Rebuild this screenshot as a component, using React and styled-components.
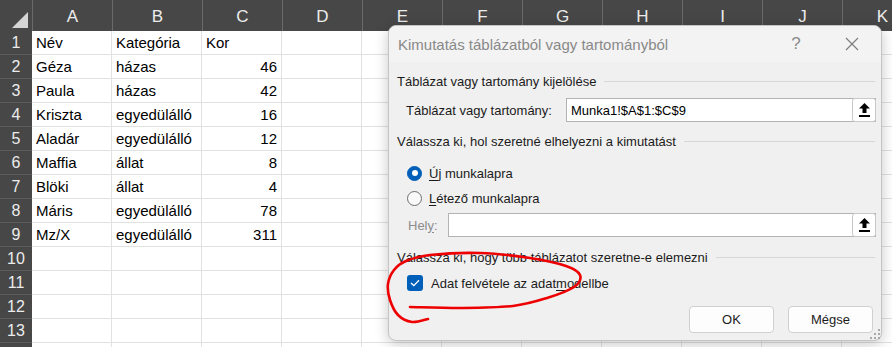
import React from 'react';
import styled, { createGlobalStyle } from 'styled-components';

const GlobalStyle = createGlobalStyle`
  html, body { margin: 0; padding: 0; background: #fff; overflow: hidden; }
  #root { position: relative; width: 892px; height: 347px; overflow: hidden; }
`;

const COLS = ['A', 'B', 'C', 'D', 'E', 'F', 'G', 'H', 'I', 'J', 'K'];
const WIDTHS = [80, 90, 80, 80, 80, 80, 80, 80, 80, 80, 80];

const DATA = [
  ['Név', 'Kategória', 'Kor'],
  ['Géza', 'házas', 46],
  ['Paula', 'házas', 42],
  ['Kriszta', 'egyedülálló', 16],
  ['Aladár', 'egyedülálló', 12],
  ['Maffia', 'állat', 8],
  ['Blöki', 'állat', 4],
  ['Máris', 'egyedülálló', 78],
  ['Mz/X', 'egyedülálló', 311],
];

const Sheet = styled.div`
  display: grid;
  grid-template-columns: 32px ${WIDTHS.map((w) => w + 'px').join(' ')};
  grid-template-rows: 31px;
  grid-auto-rows: 24px;
  font-family: "Liberation Sans", Arial, sans-serif;
`;

const Corner = styled.div`
  background: #474747;
  display: flex;
  align-items: flex-end;
  justify-content: flex-end;
  padding: 0 4px 3px 0;
`;

const ColHead = styled.div`
  background: #474747;
  border-left: 1px solid #6a6a6a;
  color: #ececec;
  font-size: 17px;
  display: flex;
  justify-content: center;
  padding-top: 7px;
`;

const RowHead = styled.div`
  background: #474747;
  border-bottom: 1px solid #5d5d5d;
  color: #ececec;
  font-size: 16px;
  display: flex;
  align-items: center;
  justify-content: center;
  padding-top: 1px;
`;

const Cell = styled.div`
  border-right: 1px solid #e1e1e1;
  border-bottom: 1px solid #e1e1e1;
  padding: 1px 4px 0;
  font-size: 15px;
  line-height: 22px;
  color: #000;
  text-align: ${(p) => (p.$num ? 'right' : 'left')};
  white-space: nowrap;
  overflow: hidden;
`;

const Dialog = styled.div`
  position: absolute;
  left: 388px;
  top: 25px;
  width: 494px;
  height: 316px;
  box-sizing: border-box;
  background: #f0f0f0;
  border: 1px solid #c4c4c4;
  border-radius: 8px;
  box-shadow: 0 3px 14px rgba(0, 0, 0, 0.22);
  font-family: "Liberation Sans", Arial, sans-serif;
  font-size: 13px;
  color: #1b1b1b;
  display: flex;
  flex-direction: column;
`;

const TitleBar = styled.div`
  height: 36px;
  display: flex;
  align-items: center;
  padding-left: 9px;
  background: #f3f3f3;
  border-radius: 8px 8px 0 0;
`;

const Title = styled.div`
  flex: 1;
  min-width: 0;
  white-space: nowrap;
  color: #898989;
  font-size: 15px;
`;

const TitleBtn = styled.div`
  width: 46px;
  height: 36px;
  display: flex;
  align-items: center;
  justify-content: center;
  color: #8a8a8a;
  font-size: 17px;
  margin-right: ${(p) => p.$mr}px;
`;

const Body = styled.div`
  flex: 1;
  display: flex;
  flex-direction: column;
  padding: 0 6px 0 8px;
  position: relative;
`;

const Section = styled.div`
  display: flex;
  align-items: center;
  height: 16px;
  margin-top: ${(p) => p.$mt}px;
  white-space: nowrap;
  &::after {
    content: '';
    flex: 1;
    height: 1px;
    background: #d7d7d7;
    margin-left: 8px;
  }
`;

const FieldRow = styled.div`
  display: flex;
  align-items: center;
  margin-top: ${(p) => p.$mt}px;
  padding-left: ${(p) => p.$pl}px;
`;

const FieldLabel = styled.div`
  width: ${(p) => p.$w}px;
  color: ${(p) => (p.$muted ? '#8c8c8c' : '#1b1b1b')};
`;

const Input = styled.div`
  flex: 1;
  height: 24px;
  box-sizing: border-box;
  background: #fff;
  border: 1px solid #b3b3b3;
  display: flex;
  align-items: center;
  padding-left: 4px;
  margin-right: -1px;
`;

const InputText = styled.div`
  flex: 1;
  color: #000;
`;

const PickBtn = styled.div`
  width: 24px;
  height: 24px;
  box-sizing: border-box;
  margin: -1px -1px -1px 0;
  border: 1px solid #c9c9c9;
  border-radius: 3px;
  background: #fff;
  display: flex;
  align-items: center;
  justify-content: center;
`;

const Choice = styled.div`
  display: flex;
  align-items: center;
  height: 20px;
  padding-left: 10px;
  margin-top: ${(p) => p.$mt}px;
`;

const Radio = styled.div`
  width: 15px;
  height: 15px;
  box-sizing: border-box;
  border-radius: 50%;
  margin-right: 7px;
  background: ${(p) => (p.$on ? '#005fb8' : '#f9f9f9')};
  border: 1px solid ${(p) => (p.$on ? '#005fb8' : '#6e6e6e')};
  display: flex;
  align-items: center;
  justify-content: center;
  &::after {
    content: '';
    display: ${(p) => (p.$on ? 'block' : 'none')};
    width: 6px;
    height: 6px;
    border-radius: 50%;
    background: #fff;
  }
`;

const Check = styled.div`
  width: 16px;
  height: 16px;
  border-radius: 3px;
  background: #005fb8;
  margin-right: 8px;
  display: flex;
  align-items: center;
  justify-content: center;
`;

const Key = styled.span`
  text-decoration: underline;
  text-underline-offset: 2px;
`;

const Buttons = styled.div`
  display: flex;
  justify-content: flex-end;
  gap: 14px;
  margin-top: 13px;
  padding-right: 2px;
`;

const Button = styled.div`
  width: 85px;
  height: 27px;
  box-sizing: border-box;
  background: #fdfdfd;
  border: 1px solid #d0d0d0;
  border-radius: 4px;
  display: flex;
  align-items: center;
  justify-content: center;
  color: #1b1b1b;
`;

const Grip = styled.svg`
  position: absolute;
  right: 1px;
  bottom: 1px;
`;

const Scribble = styled.svg`
  position: absolute;
  left: 0;
  top: 0;
  pointer-events: none;
`;

const UploadIcon = () => (
  <svg width="11" height="14" viewBox="0 0 11 14">
    <polygon points="5.5,0 0,5.5 3.5,5.5 3.5,10 7.5,10 7.5,5.5 11,5.5" fill="#000" />
    <rect x="0" y="12" width="11" height="2" fill="#000" />
  </svg>
);

const scribblePts = [
  [428, 319], [412, 322], [398, 315], [390, 300], [388, 284], [394, 270],
  [406, 261], [430, 255], [480, 253], [530, 258], [566, 266], [580, 275],
  [574, 287], [547, 298], [513, 306], [463, 308], [410, 307],
];

// catmull-rom -> cubic bezier
const smoothPath = (pts) => {
  let d = `M${pts[0][0]},${pts[0][1]}`;
  for (let i = 0; i < pts.length - 1; i++) {
    const p0 = pts[i - 1] || pts[i];
    const p1 = pts[i];
    const p2 = pts[i + 1];
    const p3 = pts[i + 2] || p2;
    const c1 = [p1[0] + (p2[0] - p0[0]) / 6, p1[1] + (p2[1] - p0[1]) / 6];
    const c2 = [p2[0] - (p3[0] - p1[0]) / 6, p2[1] - (p3[1] - p1[1]) / 6];
    d += ` C${c1[0]},${c1[1]} ${c2[0]},${c2[1]} ${p2[0]},${p2[1]}`;
  }
  return d;
};

export default function App() {
  const rows = [];
  for (let r = 1; r <= 14; r++) {
    const data = DATA[r - 1] || [];
    // row 14 is only a sliver at the bottom edge, its number falls outside
    rows.push(<RowHead key={`h${r}`}>{r < 14 ? r : ''}</RowHead>);
    COLS.forEach((c, i) => {
      const v = data[i];
      rows.push(
        <Cell key={`${c}${r}`} $num={typeof v === 'number'}>
          {v}
        </Cell>
      );
    });
  }

  return (
    <>
      <GlobalStyle />
      <Sheet>
        <Corner>
          <svg width="16" height="16" viewBox="0 0 16 16">
            <polygon points="16,0 16,16 0,16" fill="#d4d4d4" />
          </svg>
        </Corner>
        {COLS.map((c) => (
          <ColHead key={c}>{c}</ColHead>
        ))}
        {rows}
      </Sheet>

      <Dialog>
        <TitleBar>
          <Title>Kimutatás táblázatból vagy tartományból</Title>
          <TitleBtn $mr={10}>?</TitleBtn>
          <TitleBtn $mr={6}>
            <svg width="14" height="14" viewBox="0 0 14 14">
              <path d="M1 1 L13 13 M13 1 L1 13" stroke="#7a7a7a" strokeWidth="1.1" />
            </svg>
          </TitleBtn>
        </TitleBar>
        <Body>
          <Section $mt={11}>Táblázat vagy tartomány kijelölése</Section>
          <FieldRow $mt={9} $pl={9}>
            <FieldLabel $w={160}>
              Táblázat va<Key>g</Key>y tartomány:
            </FieldLabel>
            <Input>
              <InputText>Munka1!$A$1:$C$9</InputText>
              <PickBtn>
                <UploadIcon />
              </PickBtn>
            </Input>
          </FieldRow>

          <Section $mt={11}>Válassza ki, hol szeretné elhelyezni a kimutatást</Section>
          <Choice $mt={14}>
            <Radio $on />
            <span>
              <Key>Ú</Key>j munkalapra
            </span>
          </Choice>
          <Choice $mt={5}>
            <Radio />
            <span>
              <Key>L</Key>étező munkalapra
            </span>
          </Choice>
          <FieldRow $mt={5} $pl={11}>
            <FieldLabel $w={40} $muted>
              Hel<Key>y</Key>:
            </FieldLabel>
            <Input>
              <InputText />
              <PickBtn>
                <UploadIcon />
              </PickBtn>
            </Input>
          </FieldRow>

          <Section $mt={12}>Válassza ki, hogy több táblázatot szeretne-e elemezni</Section>
          <Choice $mt={8}>
            <Check>
              <svg width="10" height="8" viewBox="0 0 10 8">
                <path d="M1 4 L3.8 6.6 L9 1.2" fill="none" stroke="#fff" strokeWidth="1.3" />
              </svg>
            </Check>
            <span>
              Adat felvétele az adat<Key>m</Key>odellbe
            </span>
          </Choice>

          <Buttons>
            <Button>OK</Button>
            <Button>Mégse</Button>
          </Buttons>
          <Grip width="10" height="10" viewBox="0 0 10 10">
            <rect x="8" y="0" width="2" height="2" fill="#a9a9a9" />
            <rect x="4" y="4" width="2" height="2" fill="#a9a9a9" />
            <rect x="8" y="4" width="2" height="2" fill="#a9a9a9" />
            <rect x="0" y="8" width="2" height="2" fill="#a9a9a9" />
            <rect x="4" y="8" width="2" height="2" fill="#a9a9a9" />
            <rect x="8" y="8" width="2" height="2" fill="#a9a9a9" />
          </Grip>
        </Body>
      </Dialog>

      <Scribble width="892" height="347">
        <path
          d={smoothPath(scribblePts)}
          fill="none"
          stroke="#ee0000"
          strokeWidth="2.6"
          strokeLinecap="round"
          strokeLinejoin="round"
        />
      </Scribble>
    </>
  );
}
